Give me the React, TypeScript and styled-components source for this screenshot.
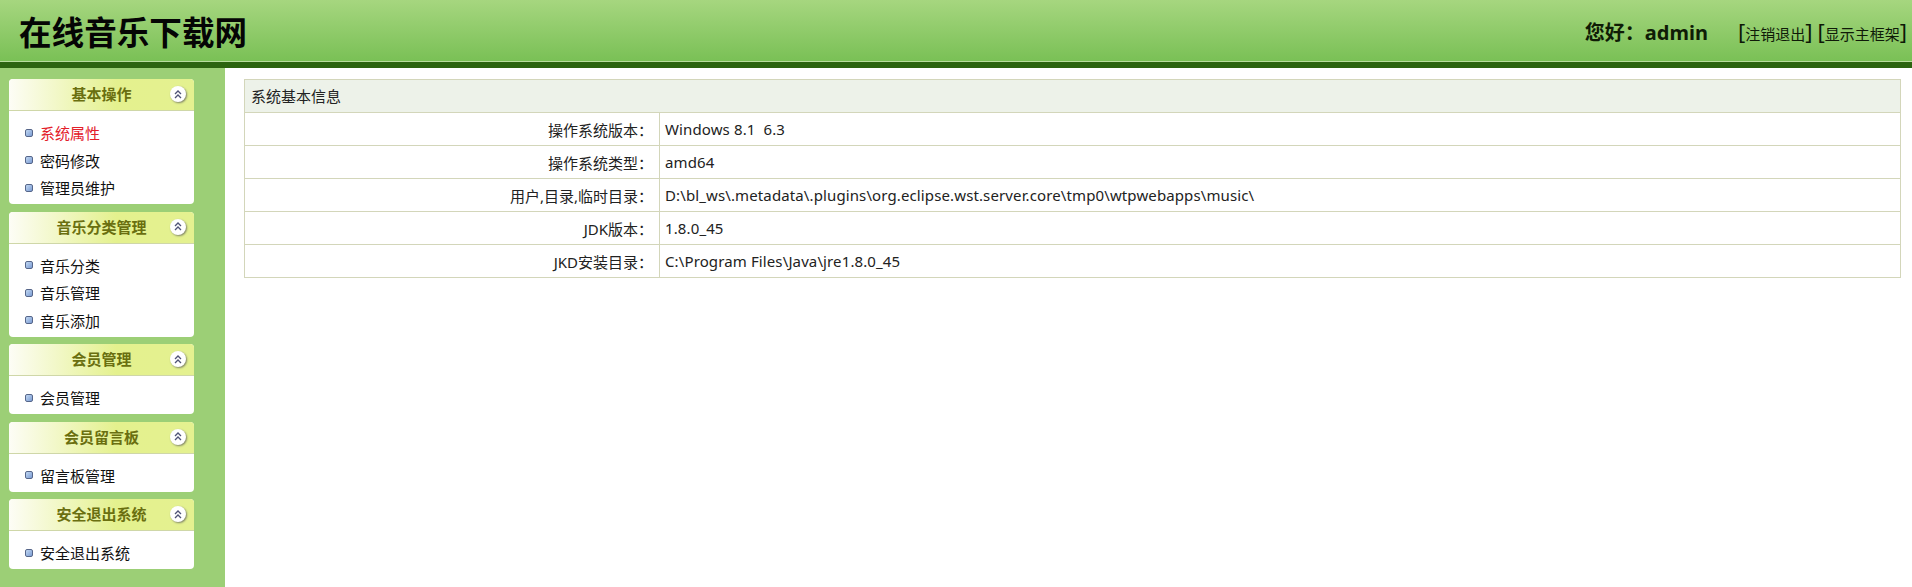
import React from "react";
import styled, { createGlobalStyle } from "styled-components";

const Global = createGlobalStyle`
  html, body { margin: 0; padding: 0; background: #fff; }
  body { font-family: "Noto Sans", "Noto Sans CJK SC", sans-serif; color: #111; }
`;

const Page = styled.div`
  width: 1912px;
  height: 587px;
  display: flex;
  flex-direction: column;
  overflow: hidden;
`;

const Header = styled.header`
  height: 62px;
  flex: none;
  display: flex;
  align-items: center;
  justify-content: space-between;
  padding: 0 5px 0 19px;
  background: linear-gradient(#a6d67f, #79c055);
  border-bottom: 6px solid #2c6410;
  box-shadow: inset 0 -1px 0 #b9dd9f;
`;

const SiteTitle = styled.h1`
  margin: 0;
  font-size: 32.6px;
  line-height: 62px;
  font-weight: 700;
  color: #050505;
  font-family: "Noto Sans CJK SC", sans-serif;
`;

const UserBar = styled.div`
  display: flex;
  align-items: center;
`;

const Greeting = styled.span`
  font-size: 20px;
  font-weight: 700;
  color: #0f1c06;
  margin-right: 30px;
  font-family: "Noto Sans", "Noto Sans CJK SC", sans-serif;
`;

const Bracket = styled.span`
  font-size: 22px;
  color: #0d1806;
  font-family: "Noto Sans", sans-serif;
  font-weight: 400;
  & + & { margin-left: 5px; }
`;

const BarLink = styled.a`
  font-size: 15px;
  color: #0f1a08;
  font-family: "Noto Sans CJK SC", sans-serif;
`;

const Body = styled.div`
  flex: 1;
  display: flex;
  min-height: 0;
`;

const Sidebar = styled.aside`
  width: 225px;
  flex: none;
  box-sizing: border-box;
  padding: 11px 31px 0 9px;
  background: #9ccf76;
  display: flex;
  flex-direction: column;
  gap: 7.5px;
`;

const Panel = styled.section`
  background: #fff;
  border-radius: 4px;
  overflow: hidden;
`;

const PanelHead = styled.div`
  height: 32px;
  box-sizing: border-box;
  display: flex;
  align-items: center;
  justify-content: center;
  position: relative;
  background: linear-gradient(90deg, #fdfdf6 0%, #e4f18e 58%, #e4f190 100%);
  border-bottom: 1px solid #cfd7a8;
  font-size: 15px;
  font-weight: 700;
  color: #6a6f10;
  font-family: "Noto Sans CJK SC", sans-serif;
  padding-bottom: 2px;
`;

const Toggle = styled.span`
  position: absolute;
  right: 8px;
  top: 7px;
  width: 16px;
  height: 16px;
  border-radius: 50%;
  background: #fff;
  box-shadow: 1px 1px 2px #7f8468;
  display: flex;
  align-items: center;
  justify-content: center;
`;

const ItemList = styled.ul<{ $rows: number }>`
  list-style: none;
  margin: 0;
  padding: 8px 0 0;
  height: ${(p) => (p.$rows === 1 ? 38 : 93)}px;
  box-sizing: border-box;
`;

const Item = styled.li<{ $active?: boolean }>`
  height: 27.5px;
  display: flex;
  align-items: center;
  padding-left: 16px;
  font-size: 15px;
  color: ${(p) => (p.$active ? "#e3202a" : "#111")};
`;

const Bullet = styled.i`
  width: 6px;
  height: 6px;
  margin-right: 7px;
  border: 1px solid #56668a;
  border-radius: 2px;
  background: linear-gradient(135deg, #c2d8f3, #7b9cd2);
`;

const Main = styled.main`
  flex: 1;
  padding: 11px 11px 0 19px;
`;

const InfoTable = styled.table`
  width: 100%;
  border-collapse: collapse;
  font-size: 15px;
  color: #222;
`;

const Caption = styled.th`
  height: 33px;
  padding: 0 0 2px 6px;
  box-sizing: border-box;
  text-align: left;
  font-weight: 400;
  font-size: 15px;
  background: #edf2e9;
  border: 1px solid #d3d6ba;
`;

const Label = styled.td`
  width: 408px;
  height: 32px;
  padding: 0 6px 0 0;
  text-align: right;
  border: 1px solid #d3d6ba;
`;

const Value = styled.td`
  height: 32px;
  padding: 0 0 0 5px;
  border: 1px solid #d3d6ba;
  white-space: pre;
  letter-spacing: 0.12px;
`;

const Chevrons = () => (
  <svg width="10" height="11" viewBox="0 0 10 11" fill="none" stroke="#4f5376" strokeWidth="1.3">
    <path d="M2 5 5 2 8 5" />
    <path d="M2 9 5 6 8 9" />
  </svg>
);

const menu = [
  { title: "基本操作", items: ["系统属性", "密码修改", "管理员维护"], active: 0 },
  { title: "音乐分类管理", items: ["音乐分类", "音乐管理", "音乐添加"] },
  { title: "会员管理", items: ["会员管理"] },
  { title: "会员留言板", items: ["留言板管理"] },
  { title: "安全退出系统", items: ["安全退出系统"] },
];

const rows = [
  ["操作系统版本：", "Windows 8.1  6.3"],
  ["操作系统类型：", "amd64"],
  ["用户,目录,临时目录：", "D:\\bl_ws\\.metadata\\.plugins\\org.eclipse.wst.server.core\\tmp0\\wtpwebapps\\music\\"],
  ["JDK版本：", "1.8.0_45"],
  ["JKD安装目录：", "C:\\Program Files\\Java\\jre1.8.0_45"],
];

export default function App() {
  return (
    <Page>
      <Global />
      <Header>
        <SiteTitle>在线音乐下载网</SiteTitle>
        <UserBar>
          <Greeting>您好：admin</Greeting>
          <Bracket>[<BarLink>注销退出</BarLink>]</Bracket>
          <Bracket>[<BarLink>显示主框架</BarLink>]</Bracket>
        </UserBar>
      </Header>
      <Body>
        <Sidebar>
          {menu.map((m) => (
            <Panel key={m.title}>
              <PanelHead>
                {m.title}
                <Toggle><Chevrons /></Toggle>
              </PanelHead>
              <ItemList $rows={m.items.length}>
                {m.items.map((it, i) => (
                  <Item key={it} $active={m.active === i}>
                    <Bullet />
                    {it}
                  </Item>
                ))}
              </ItemList>
            </Panel>
          ))}
        </Sidebar>
        <Main>
          <InfoTable>
            <thead>
              <tr><Caption colSpan={2}>系统基本信息</Caption></tr>
            </thead>
            <tbody>
              {rows.map(([a, b]) => (
                <tr key={a}>
                  <Label>{a}</Label>
                  <Value>{b}</Value>
                </tr>
              ))}
            </tbody>
          </InfoTable>
        </Main>
      </Body>
    </Page>
  );
}
